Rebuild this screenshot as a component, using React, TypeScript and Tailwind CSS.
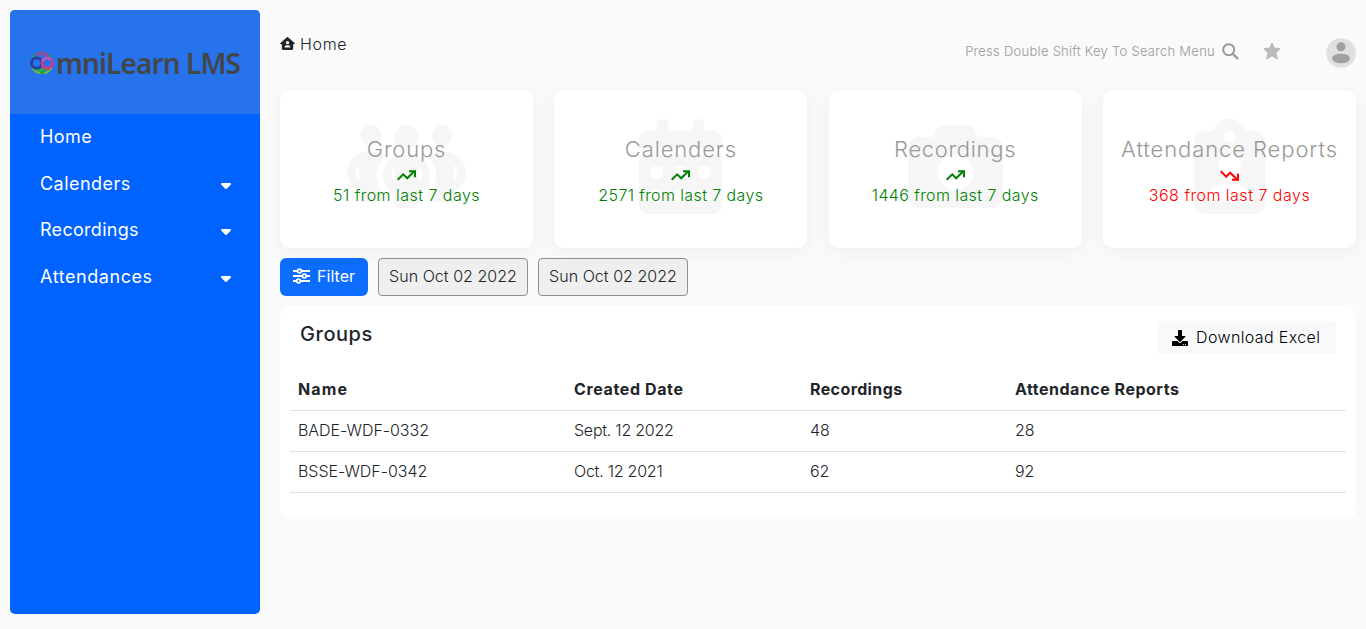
import type { ReactNode } from 'react';
import {
  FaCalendarDays,
  FaCamera,
  FaCaretDown,
  FaClipboardUser,
  FaHouseUser,
  FaPeopleGroup,
} from 'react-icons/fa6';
import { FaDownload } from 'react-icons/fa';
import { BiSolidStar } from 'react-icons/bi';

function LogoMark() {
  return (
    <svg viewBox="0 0 24 24" className="h-6 w-6 shrink-0" fill="none">
      <path d="M2.500 7.500a10.500 10.500 0 0 1 19 0" stroke="#1f9a63" strokeWidth="2" />
      <path d="M6 4.500a9 9 0 0 1 12 0" stroke="#8b4fa8" strokeWidth="3.400" />
      <path d="M2 16c2 4 5.500 6.300 10 6.300s8-2.300 10-6.300" stroke="#7fb92f" strokeWidth="1.800" />
      <path d="M12 14l3.500 5-2 4h-3l-2-4z" fill="#1fa24a" />
      <path d="M4.500 18.500q4 1.200 7.500 0t7.500 0" stroke="#2fae4b" strokeWidth="2" />
      <circle cx="6.700" cy="12" r="5.200" stroke="#263f9e" strokeWidth="2.800" />
      <circle cx="17.300" cy="12" r="5.200" stroke="#d8358c" strokeWidth="2.800" />
      <path d="M12.300 10.500a5.200 5.200 0 0 1 9 -1.500" stroke="#b45bc0" strokeWidth="2.400" />
    </svg>
  );
}

function TrendIcon({ down = false }: { down?: boolean }) {
  return (
    <svg
      viewBox="0 0 19 11"
      className={down ? 'h-[11px] w-[19px] -scale-y-100' : 'h-[11px] w-[19px]'}
      fill="none"
      stroke="currentColor"
      strokeWidth="2"
    >
      <path d="M.7 9.800 6.200 4.300l4 4 6.800-6.800" />
      <path d="M12 1.200h6v6" />
    </svg>
  );
}

function SlidersIcon() {
  return (
    <svg viewBox="0 0 17 16" className="h-4 w-[17px]" fill="none" stroke="currentColor" strokeWidth="1.800">
      <path d="M0 3h4.500M8.500 3h8.500M0 8h9.300M13.300 8h3.700M0 13h3.500M7.500 13h9.500" />
      <circle cx="6.500" cy="3" r="1.900" />
      <circle cx="11.300" cy="8" r="1.900" />
      <circle cx="5.500" cy="13" r="1.900" />
    </svg>
  );
}

function SearchIcon() {
  return (
    <svg viewBox="0 0 17 17" className="mb-0.5 ml-[7px] h-[17px] w-[17px]" fill="none" stroke="currentColor">
      <circle cx="6.700" cy="6.700" r="5.500" strokeWidth="2" />
      <path d="m10.800 10.800 5.200 5.200" strokeWidth="2.400" />
    </svg>
  );
}

const navItems = [
  { label: 'Home', tracking: 'tracking-[0.45px]', menu: false },
  { label: 'Calenders', tracking: 'tracking-[0.47px]', menu: true },
  { label: 'Recordings', tracking: 'tracking-[0.29px]', menu: true },
  { label: 'Attendances', tracking: 'tracking-[0.57px]', menu: true },
];

function Sidebar() {
  return (
    <aside className="flex h-[604px] w-[250px] shrink-0 flex-col overflow-hidden rounded-[5px] bg-[#0062ff]">
      <div className="flex h-[104px] items-center bg-[#2773ec] pl-5 pt-0.5">
        <LogoMark />
        <span className="ml-0.5 whitespace-nowrap font-['Noto_Sans'] text-[28px] font-semibold leading-none tracking-[-0.89px] text-[#444648]">
          mniLearn LMS
        </span>
      </div>
      <nav className="flex flex-col text-lg text-white">
        {navItems.map((item) => (
          <a key={item.label} className="flex h-[46.600px] items-center justify-between pl-[30px] pr-7">
            <span className={item.tracking}>{item.label}</span>
            {item.menu && <FaCaretDown className="mt-0.5 h-4 w-3" />}
          </a>
        ))}
      </nav>
    </aside>
  );
}

function TopBar() {
  return (
    <header className="flex h-20 justify-between">
      <div className="flex h-[67px] items-center text-base font-light text-[#212529]">
        <FaHouseUser className="h-[13px] w-[15px]" />
        <span className="ml-[5px] tracking-[0.65px]">Home</span>
      </div>
      <div className="flex h-[84px] items-center text-[#999]">
        <span className="whitespace-nowrap text-[13px] font-light tracking-[0.27px]">
          Press Double Shift Key To Search Menu
        </span>
        <SearchIcon />
        <BiSolidStar className="mb-[3px] ml-[23px] h-5 w-5 text-[#bbb]" />
        <svg viewBox="0 0 30 30" className="ml-11 mt-0.5 h-[30px] w-[30px]">
          <circle cx="15" cy="15" r="14.800" fill="#e0e0e0" />
          <circle cx="15" cy="8.800" r="4.500" fill="#a0a0a0" />
          <ellipse cx="15" cy="20.500" rx="9" ry="4.800" fill="#a0a0a0" />
        </svg>
      </div>
    </header>
  );
}

interface StatProps {
  title: string;
  titleTracking: string;
  note: string;
  noteTracking: string;
  icon: ReactNode;
  down?: boolean;
}

function StatCard({ title, titleTracking, note, noteTracking, icon, down }: StatProps) {
  return (
    <section className="relative flex h-[158px] w-[253px] flex-col items-center rounded-[10px] bg-white pt-[43px] shadow-[0_4px_20px_rgba(0,0,0,0.05)]">
      <div className="absolute inset-x-0 top-[29px] flex justify-center text-[95px] text-[#f6f6f6]">{icon}</div>
      <h2 className={`relative whitespace-nowrap text-[22px] font-light leading-8 text-[#999] ${titleTracking}`}>
        {title}
      </h2>
      <div className={`relative flex flex-col items-center ${down ? 'text-[#ff0000]' : 'text-[#008000]'}`}>
        <div className="mt-[5px]">
          <TrendIcon down={down} />
        </div>
        <p className={`mt-0.5 whitespace-nowrap text-base font-light leading-6 ${noteTracking}`}>{note}</p>
      </div>
    </section>
  );
}

const rows = [
  ['BADE-WDF-0332', 'Sept. 12 2022', '48', '28'],
  ['BSSE-WDF-0342', 'Oct. 12 2021', '62', '92'],
];
const cellTracking = ['tracking-[-0.03px]', 'tracking-[-0.24px]', 'tracking-[-0.17px]', 'tracking-[-0.17px]'];

function GroupsPanel() {
  return (
    <section className="mt-2.5 h-[213px] rounded-[10px] bg-white px-2.5 pt-[15px]">
      <div className="flex h-12 items-start justify-between px-2.5">
        <h3 className="text-xl font-medium leading-[27px] tracking-[0.55px] text-[#212529]">Groups</h3>
        <button className="flex h-[33px] w-[179px] items-center rounded bg-[#f8f9fa] pl-[15px] font-light text-black">
          <FaDownload className="h-4 w-4" />
          <span className="mb-0.5 ml-2 whitespace-nowrap tracking-[0.38px]">Download Excel</span>
        </button>
      </div>
      <table className="w-full table-fixed border-collapse text-left text-[#212529]">
        <colgroup>
          <col className="w-[276px]" />
          <col className="w-[236px]" />
          <col className="w-[205px]" />
          <col />
        </colgroup>
        <thead>
          <tr className="h-[41px] border-b border-[#dee2e6] font-bold">
            <th className="px-2 tracking-[1.1px]">Name</th>
            <th className="px-2 tracking-[0.62px]">Created Date</th>
            <th className="px-2 tracking-[0.39px]">Recordings</th>
            <th className="px-2 tracking-[0.5px]">Attendance Reports</th>
          </tr>
        </thead>
        <tbody>
          {rows.map((row) => (
            <tr key={row[0]} className="h-[41px] border-b border-[#dee2e6] font-light">
              {row.map((cell, i) => (
                <td key={i} className={`px-2 pb-0.5 ${cellTracking[i]}`}>
                  {cell}
                </td>
              ))}
            </tr>
          ))}
        </tbody>
      </table>
    </section>
  );
}

function DateField() {
  return (
    <div className="flex h-[38px] w-[150px] items-center justify-center whitespace-nowrap rounded border border-[#8f8f8f] bg-[#efefef] pb-0.5 text-base font-light tracking-[0.03px] text-[#212529]">
      Sun Oct 02 2022
    </div>
  );
}

export default function App() {
  return (
    <div className="flex h-[629px] w-full gap-5 overflow-hidden bg-[#fafafa] p-2.5 font-['Inter',sans-serif]">
      <Sidebar />
      <main className="w-[1076px] shrink-0">
        <TopBar />
        <div className="flex justify-between">
          <StatCard
            title="Groups"
            titleTracking="tracking-[0.8px]"
            note="51 from last 7 days"
            noteTracking="tracking-[0.47px]"
            icon={<FaPeopleGroup className="h-[95px] w-[119px]" />}
          />
          <StatCard
            title="Calenders"
            titleTracking="tracking-[0.88px]"
            note="2571 from last 7 days"
            noteTracking="tracking-[0.39px]"
            icon={<FaCalendarDays />}
          />
          <StatCard
            title="Recordings"
            titleTracking="tracking-[0.7px]"
            note="1446 from last 7 days"
            noteTracking="tracking-[0.41px]"
            icon={<FaCamera />}
          />
          <StatCard
            title="Attendance Reports"
            titleTracking="tracking-[0.9px]"
            note="368 from last 7 days"
            noteTracking="tracking-[0.5px]"
            icon={<FaClipboardUser />}
            down
          />
        </div>
        <div className="mt-2.5 flex gap-2.5">
          <button className="flex h-[38px] w-[88px] items-center rounded-md bg-[#0d6efd] pb-0.5 pl-[13px] text-white">
            <SlidersIcon />
            <span className="ml-[7px] tracking-[0.05px]">Filter</span>
          </button>
          <DateField />
          <DateField />
        </div>
        <GroupsPanel />
      </main>
    </div>
  );
}
